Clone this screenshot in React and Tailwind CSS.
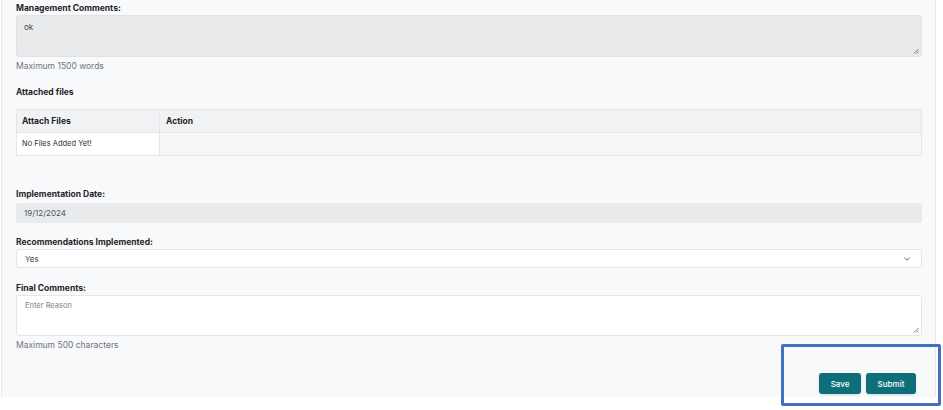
import { ChevronDown } from 'lucide-react';

function Label({ children, className = '' }) {
  return <div className={`text-[8.5px] leading-[12px] font-bold text-[#1f2328] ${className}`}>{children}</div>;
}

function Hint({ children, className = '' }) {
  return <div className={`text-[8.5px] leading-[12px] text-[#6f757c] ${className}`}>{children}</div>;
}

function Grip() {
  return (
    <svg className="absolute right-[2px] bottom-[2px]" width="6" height="6" viewBox="0 0 6 6">
      <path d="M5.5 1 L1 5.5 M5.5 3.5 L3.5 5.5" stroke="#6b6b6b" strokeWidth="0.9" />
    </svg>
  );
}

export default function App() {
  return (
    <div className="relative w-[943px] h-[410px] bg-white overflow-hidden" style={{ fontFamily: 'Inter, "Noto Sans", sans-serif' }}>
      <div className="ml-[1px] w-[935px] h-[397px] bg-[#f8f9fa] border-l border-r border-[#e6e8eb] pl-[14px] pr-[13px] pt-[2px]">
        <Label>Management Comments:</Label>
        <div className="relative mt-[1px] h-[42px] rounded-[3px] bg-[#e9eaec] border border-[#e0e2e5] px-[7px] pt-[5px] text-[8px] text-[#3d4148]">
          ok
          <Grip />
        </div>
        <Hint className="mt-[3px]">Maximum 1500 words</Hint>

        <Label className="mt-[14px]">Attached files</Label>
        <div className="mt-[11px] border border-[#e4e6e9] text-[8px]">
          <div className="flex h-[23px] bg-[#f1f2f4] border-b border-[#e4e6e9]">
            <div className="w-[143px] border-r border-[#e4e6e9] flex items-center px-[5px] font-bold text-[8.5px] text-[#1f2328]">Attach Files</div>
            <div className="flex-1 flex items-center px-[6px] font-bold text-[8.5px] text-[#1f2328]">Action</div>
          </div>
          <div className="flex h-[22px]">
            <div className="w-[143px] bg-white border-r border-[#e4e6e9] flex items-center px-[5px] text-[7.5px] text-[#2b2f35]">No Files Added Yet!</div>
            <div className="flex-1 bg-[#f6f7f8]"></div>
          </div>
        </div>

        <Label className="mt-[32px]">Implementation Date:</Label>
        <div className="mt-[3px] h-[20px] rounded-[3px] bg-[#e9eaec] flex items-center px-[8px] text-[8px] text-[#50565d]">19/12/2024</div>

        <Label className="mt-[13px]">Recommendations Implemented:</Label>
        <div className="mt-[1px] h-[19px] rounded-[3px] bg-white border border-[#e4e6e9] flex items-center justify-between px-[8px] text-[8px] text-[#3d4148]">
          <span>Yes</span>
          <ChevronDown size={10} strokeWidth={2} className="text-[#444] mr-[1px]" />
        </div>

        <Label className="mt-[14px]">Final Comments:</Label>
        <div className="relative mt-[1px] h-[41px] rounded-[3px] bg-white border border-[#e4e6e9] px-[8px] pt-[4px] text-[7.5px] text-[#7a7f86]">
          Enter Reason
          <Grip />
        </div>
        <Hint className="mt-[3px]">Maximum 500 characters</Hint>

        <div className="mt-[22px] flex justify-end gap-[5px] pr-[6px]">
          <button className="w-[42px] h-[21px] rounded-[3px] bg-[#0e6f7a] text-white text-[8px] font-medium shadow-sm">Save</button>
          <button className="w-[50px] h-[21px] rounded-[3px] bg-[#0e6f7a] text-white text-[8px] font-medium shadow-sm">Submit</button>
        </div>
      </div>
      <div className="absolute left-[781px] top-[344px] w-[160px] h-[62px] border-[3px] border-[#466fbf] rounded-[2px]"></div>
    </div>
  );
}
